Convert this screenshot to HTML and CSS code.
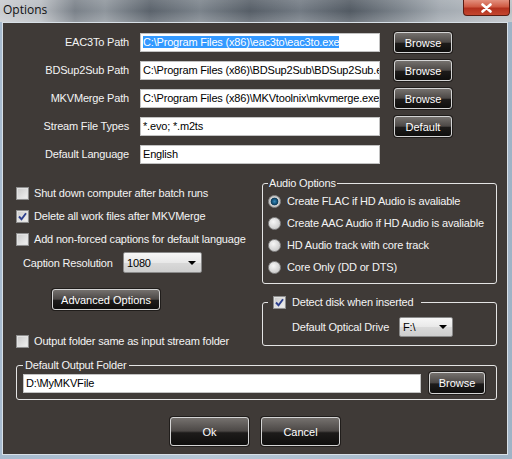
FILE: index.html
```html
<!DOCTYPE html>
<html>
<head>
<meta charset="utf-8">
<link rel="stylesheet" href="styles.css">
</head>
<body>
<div class="window">
  <div class="titlebar">
    <span class="title">Options</span>
    <div class="close">
      <svg width="13" height="10" viewBox="0 0 13 10"><path d="M2.5 1.5 L10.5 8.5 M10.5 1.5 L2.5 8.5" stroke="#fff" stroke-width="2.6" stroke-linecap="round"/></svg>
    </div>
  </div>
  <div class="frame">
    <div class="client">
      <div class="paths">
        <div class="lbl">EAC3To Path</div>
        <div class="field"><span class="sel">C:\Program Files (x86)\eac3to\eac3to.exe</span></div>
        <div class="btn">Browse</div>

        <div class="lbl">BDSup2Sub Path</div>
        <div class="field">C:\Program Files (x86)\BDSup2Sub\BDSup2Sub.exe</div>
        <div class="btn">Browse</div>

        <div class="lbl">MKVMerge Path</div>
        <div class="field">C:\Program Files (x86)\MKVtoolnix\mkvmerge.exe</div>
        <div class="btn">Browse</div>

        <div class="lbl">Stream File Types</div>
        <div class="field">*.evo; *.m2ts</div>
        <div class="btn">Default</div>

        <div class="lbl">Default Language</div>
        <div class="field">English</div>
      </div>

      <div class="middle">
        <div class="left">
          <div class="chk-row"><span class="cb"></span><span>Shut down computer after batch runs</span></div>
          <div class="chk-row"><span class="cb"><svg width="11" height="11" viewBox="0 0 11 11"><path d="M2 5.5 L4.5 8.2 L9 2.2" fill="none" stroke="#2c3f8e" stroke-width="1.9"/></svg></span><span>Delete all work files after MKVMerge</span></div>
          <div class="chk-row"><span class="cb"></span><span>Add non-forced captions for default language</span></div>
          <div class="caption-row">
            <span class="l">Caption Resolution</span>
            <div class="dd"><span>1080</span><span class="arrow"></span></div>
          </div>
          <div class="btn adv">Advanced Options</div>
          <div class="chk-row out"><span class="cb"></span><span>Output folder same as input stream folder</span></div>
        </div>
        <div class="right">
          <fieldset class="group audio">
            <legend>Audio Options</legend>
            <div class="radio-row"><span class="rb on"></span><span>Create FLAC if HD Audio is avaliable</span></div>
            <div class="radio-row"><span class="rb"></span><span>Create AAC Audio if HD Audio is avaliable</span></div>
            <div class="radio-row"><span class="rb"></span><span>HD Audio track with core track</span></div>
            <div class="radio-row"><span class="rb"></span><span>Core Only (DD or DTS)</span></div>
          </fieldset>
          <fieldset class="group detect">
            <legend><span class="lg"><span class="cb"><svg width="11" height="11" viewBox="0 0 11 11"><path d="M2 5.5 L4.5 8.2 L9 2.2" fill="none" stroke="#2c3f8e" stroke-width="1.9"/></svg></span><span>Detect disk when inserted</span></span></legend>
            <div class="drive-row">
              <span class="l">Default Optical Drive</span>
              <div class="dd small"><span>F:\</span><span class="arrow"></span></div>
            </div>
          </fieldset>
        </div>
      </div>

      <fieldset class="group output">
        <legend>Default Output Folder</legend>
        <div class="out-row">
          <div class="field wide">D:\MyMKVFile</div>
          <div class="btn b56">Browse</div>
        </div>
      </fieldset>

      <div class="actions">
        <div class="btn big">Ok</div>
        <div class="btn big">Cancel</div>
      </div>
    </div>
  </div>
</div>
</body>
</html>
```

FILE: styles.css
```css
* { box-sizing: border-box; }

body {
  margin: 0;
  width: 512px;
  height: 459px;
  overflow: hidden;
  font-family: "Liberation Sans", Arial, sans-serif;
  font-size: 11px;
}

.window {
  width: 512px;
  height: 459px;
  display: flex;
  flex-direction: column;
  background: linear-gradient(90deg, #a6bace, #b7c7d6 40%, #9fb3c6);
}

.titlebar {
  height: 22px;
  display: flex;
  justify-content: space-between;
  align-items: flex-start;
  background:
    linear-gradient(rgba(255,255,255,0.12), rgba(255,255,255,0) 50%, rgba(255,255,255,0.18)),
    linear-gradient(90deg, #c9ccd0 0px, #b9bdc2 40px, #7a8189 75px, #8e959c 105px, #5b636c 150px, #7b838b 200px, #565e67 250px, #727a83 300px, #525a63 350px, #7c848c 400px, #a2a9b0 440px, #bcc1c6 512px);
}

.title {
  font-family: "Open Sans", "Noto Sans", sans-serif;
  font-size: 12px;
  line-height: 16px;
  padding: 2px 0 0 3px;
  color: #111;
}

.close {
  width: 47px;
  height: 16px;
  margin-right: 2px;
  border: 1px solid #5a1c12;
  border-top: 0;
  border-radius: 0 0 4px 4px;
  background: linear-gradient(#e3907e, #cf5a43 45%, #b3311e 55%, #c4462f);
  display: flex;
  align-items: center;
  justify-content: center;
}

.frame {
  flex: 1;
  padding: 0 4px 4px 2px;
}

.client {
  height: 433px;
  border: 1px solid #d8e0e7;
  background: #3f3a37;
  color: #f4f4f4;
  overflow: hidden;
  letter-spacing: -0.18px;
  white-space: nowrap;
}

.paths {
  display: grid;
  grid-template-columns: 137px 254px 58px;
  grid-auto-rows: 21px;
  row-gap: 7px;
  margin-top: 9px;
}

.lbl {
  text-align: right;
  padding-right: 11px;
  line-height: 21px;
}

.field {
  align-self: center;
  width: 240px;
  height: 19px;
  background: #fff;
  border: 1px solid #c2c2c2;
  color: #000;
  line-height: 17px;
  padding-left: 2px;
  white-space: nowrap;
  overflow: hidden;
}

.sel {
  background: #3399ff;
  color: #fff;
}

.btn {
  border: 1px solid #d4d4d4;
  border-radius: 3px;
  background: linear-gradient(#75716e, #4c4846 48%, #1d1b1a 55%, #0f0e0d);
  color: #fff;
  display: flex;
  align-items: center;
  justify-content: center;
  box-shadow: 0 0 0 1px #201d1b;
  letter-spacing: 0;
}

.middle {
  display: flex;
  margin-top: 11px;
}

.left {
  width: 259px;
  padding-top: 7px;
}

.chk-row {
  display: flex;
  align-items: center;
  height: 20px;
  padding-left: 13px;
  gap: 5px;
  margin-bottom: 3px;
}

.cb {
  width: 13px;
  height: 13px;
  flex: none;
  border: 1px solid #8e8e8e;
  background: linear-gradient(135deg, #c9c9c9, #f2f2f2);
  box-shadow: inset 0 0 0 1px #e2e2e2;
  display: flex;
  align-items: center;
  justify-content: center;
}

.caption-row {
  display: flex;
  align-items: center;
  height: 21px;
  padding-left: 20px;
  margin-top: 1px;
}

.caption-row .l { width: 100px; }

.dd {
  width: 79px;
  height: 21px;
  border: 1px solid #8a8a8a;
  border-radius: 2px;
  background: linear-gradient(#f7f7f7, #e8e8e8 50%, #d9d9d9 52%, #cecece);
  color: #000;
  display: flex;
  align-items: center;
  justify-content: space-between;
  padding: 0 5px 0 3px;
}

.arrow {
  width: 0;
  height: 0;
  border-left: 4px solid transparent;
  border-right: 4px solid transparent;
  border-top: 4px solid #000;
}

.adv {
  margin: 16px 0 0 49px;
  width: 108px;
  height: 21px;
}

.chk-row.out { margin-top: 21px; margin-bottom: 0; }

.right { width: 235px; }

.group {
  margin: 0;
  min-width: 0;
  border: 1px solid #e4e4e4;
  border-radius: 3px;
}

.group legend {
  padding: 0 1px;
  line-height: 14px;
  font-size: 11px;
}

.audio { padding: 0 5px 5px 5px; }

.radio-row {
  display: flex;
  align-items: center;
  height: 22px;
  gap: 6px;
}

.rb {
  width: 13px;
  height: 13px;
  flex: none;
  border-radius: 50%;
  border: 1px solid #8c8c8c;
  background: radial-gradient(circle at 40% 35%, #f6f6f6, #d2d2d2 65%, #b9b9b9);
}

.rb.on {
  background: radial-gradient(circle at 50% 50%, #3a8ab8 0, #1b5e88 2px, #0e3a57 3.5px, #cfcfcf 4.2px, #b5b5b5 100%);
}

.detect {
  margin-top: 11px;
  padding: 0 5px 8px 5px;
}

.detect legend { padding: 0 8px 0 5px; }

.lg {
  display: inline-flex;
  align-items: center;
  gap: 6px;
  vertical-align: top;
  height: 14px;
}

.drive-row {
  display: flex;
  align-items: center;
  height: 20px;
  margin-top: 8px;
  padding-left: 24px;
}

.drive-row .l { width: 107px; }

.dd.small { width: 54px; height: 20px; }

.output {
  margin: 7px 10px 0 13px;
  padding: 0 11px 5px 6px;
}

.output legend { padding: 0 3px 0 2px; }

.out-row {
  display: flex;
  align-items: center;
  height: 22px;
  gap: 8px;
}

.field.wide { width: 398px; }

.b56 { width: 56px; height: 22px; }

.actions {
  display: flex;
  justify-content: center;
  gap: 12px;
  margin-top: 17px;
}

.big { width: 79px; height: 29px; }
```
